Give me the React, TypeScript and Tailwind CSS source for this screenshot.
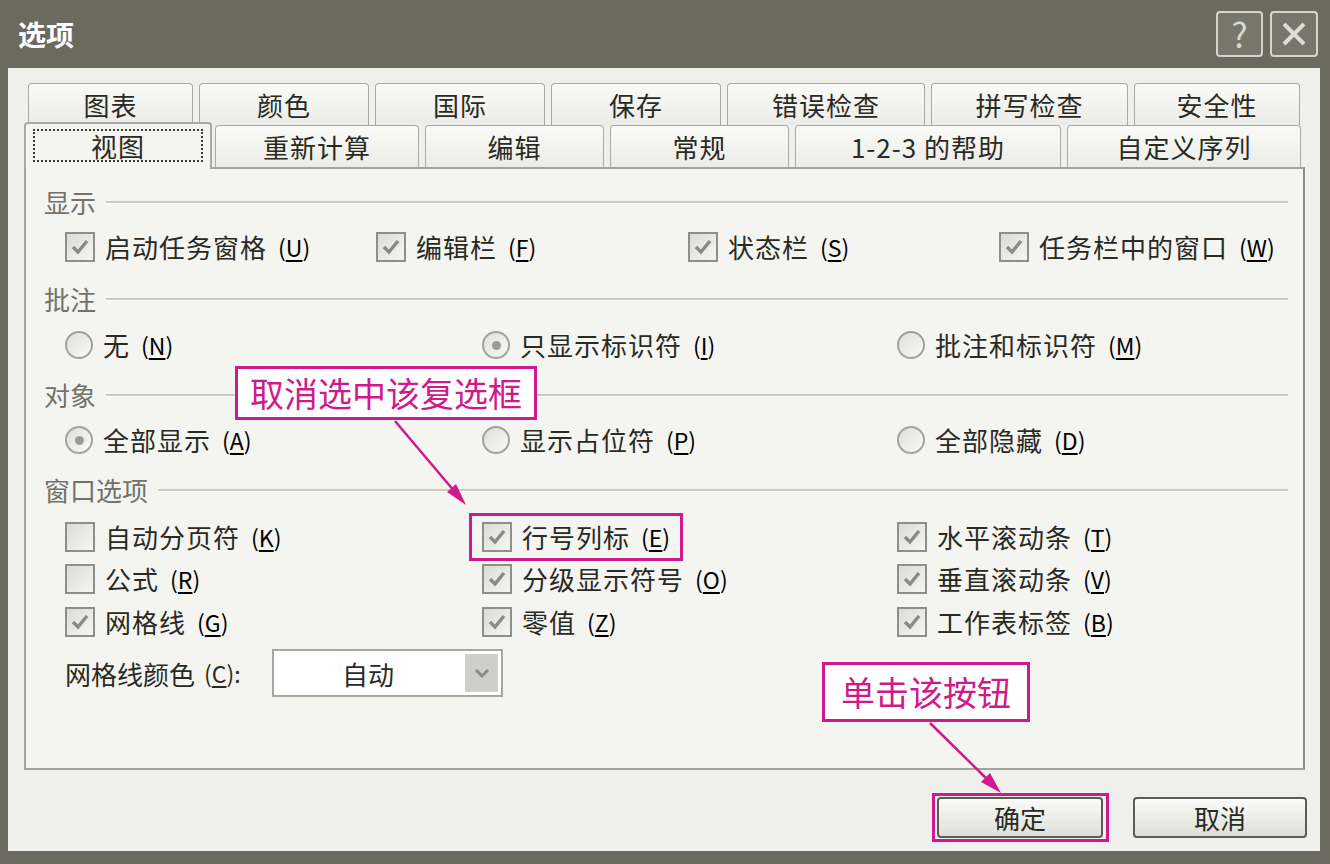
import React from "react";

const FONT = { fontFamily: '"Noto Sans CJK SC", "Noto Sans", sans-serif' };

function Key({ k }: { k: string }) {
    return (
        <span className="ml-[11px] text-[23px]">
            (<span className="underline underline-offset-[3px]">{k}</span>)
        </span>
    );
}

function Check({ label, k, checked }: { label: string; k: string; checked?: boolean }) {
    return (
        <div className="flex items-center">
            <div className="w-[30px] h-[30px] border-2 border-[#8f8f88] bg-gradient-to-br from-[#dcdcd6] to-[#f5f5f2] flex items-center justify-center">
                {checked && (
                    <svg width="20" height="20" viewBox="0 0 20 20">
                        <path d="M3 10 L8 15 L17 4" fill="none" stroke="#8b8b80" strokeWidth="3.5" />
                    </svg>
                )}
            </div>
            <span className="ml-[10px] text-[26px] text-[#2a2a24] leading-none tracking-[1px]">{label}</span>
            <Key k={k} />
        </div>
    );
}

function Radio({ label, k, checked }: { label: string; k: string; checked?: boolean }) {
    return (
        <div className="flex items-center">
            <div className="w-[28px] h-[28px] rounded-full border-2 border-[#a3a39c] bg-gradient-to-br from-[#dededb] to-[#fafaf8] flex items-center justify-center">
                {checked && <div className="w-[9px] h-[9px] rounded-full bg-[#9b9b92]" />}
            </div>
            <span className="ml-[10px] text-[26px] text-[#2a2a24] leading-none tracking-[1px]">{label}</span>
            <Key k={k} />
        </div>
    );
}

function Heading({ label, mt }: { label: string; mt: string }) {
    return (
        <div className={`flex items-center h-[40px] pl-[18px] pr-[15px] ${mt}`}>
            <span className="text-[26px] text-[#72726a] leading-none">{label}</span>
            <div className="flex-1 ml-[10px] border-t-2 border-[#cacac4] border-b border-b-white" />
        </div>
    );
}

const backTabs = [
    { name: "图表", w: "w-[165px]" },
    { name: "颜色", w: "w-[170px]" },
    { name: "国际", w: "w-[170px]" },
    { name: "保存", w: "w-[170px]" },
    { name: "错误检查", w: "w-[198px]" },
    { name: "拼写检查", w: "w-[197px]" },
    { name: "安全性", w: "w-[166px]" },
];

const frontTabs = [
    { name: "重新计算", w: "w-[204px]" },
    { name: "编辑", w: "w-[179px]" },
    { name: "常规", w: "w-[179px]" },
    { name: "1-2-3 的帮助", w: "w-[266px]" },
    { name: "自定义序列", w: "w-[234px]" },
];

export default function App() {
    return (
        <div className="relative w-[1330px] h-[864px] bg-[#6b6a5e] flex flex-col overflow-hidden" style={FONT}>
            {/* Title bar */}
            <div className="h-[68px] flex items-center justify-between pl-[18px] pr-[12px]">
                <span className="text-[28px] font-bold text-white">选项</span>
                <div className="flex gap-[7px]">
                    <div className="w-[47px] h-[46px] rounded-[4px] border-2 border-[#d4d4cc] bg-[#77766a] flex items-center justify-center text-[34px] text-[#d8d8d0] leading-none">?</div>
                    <div className="w-[48px] h-[46px] rounded-[4px] border-2 border-[#d4d4cc] bg-[#77766a] flex items-center justify-center">
                        <svg width="30" height="30" viewBox="0 0 30 30">
                            <path d="M5 5 L25 25 M25 5 L5 25" stroke="#dcdcd4" strokeWidth="4" />
                        </svg>
                    </div>
                </div>
            </div>

            {/* Client area */}
            <div className="ml-[8px] mr-[10px] mb-[13px] flex-1 bg-[#efefeb] flex flex-col">
                {/* Tabs */}
                <div className="pt-[15px]">
                    <div className="flex gap-[6px] pl-[20px] h-[42px]">
                        {backTabs.map((t) => (
                            <div
                                key={t.name}
                                className={`${t.w} h-[42px] rounded-t-[4px] border border-b-0 border-[#a9a9a2] bg-gradient-to-b from-[#fafaf8] to-[#ebebe7] flex items-center justify-center text-[26px] text-[#2a2a24] tracking-[1px]`}
                            >
                                {t.name}
                            </div>
                        ))}
                    </div>
                    <div className="flex items-end h-[42px] pl-[16px]">
                        <div className="relative z-10 w-[188px] h-[47px] -mb-[2px] rounded-t-[4px] border-2 border-b-0 border-[#a9a9a2] bg-[#f4f4f1] flex items-center justify-center">
                            <div className="w-[170px] h-[33px] mt-[-3px] border-2 border-dotted border-[#3a3a34] flex items-center justify-center text-[26px] text-[#2a2a24] tracking-[1px]">
                                视图
                            </div>
                        </div>
                        <div className="flex gap-[6px] ml-[3px]">
                            {frontTabs.map((t) => (
                                <div
                                    key={t.name}
                                    className={`${t.w} h-[42px] rounded-t-[4px] border border-b-0 border-[#a9a9a2] bg-gradient-to-b from-[#fafaf8] to-[#ebebe7] flex items-center justify-center text-[26px] text-[#2a2a24] tracking-[1px]`}
                                >
                                    {t.name}
                                </div>
                            ))}
                        </div>
                    </div>
                </div>

                {/* Panel */}
                <div className="ml-[16px] w-[1281px] h-[603px] border-2 border-[#a4a49e] border-r-[#8c8c86] bg-[#f4f4f1] pt-[13px]">
                    <Heading label="显示" mt="mt-0" />
                    <div className="flex items-center h-[40px] pl-[39px] mt-[5px]">
                        <div className="w-[311px]"><Check label="启动任务窗格" k="U" checked /></div>
                        <div className="w-[312px]"><Check label="编辑栏" k="F" checked /></div>
                        <div className="w-[311px]"><Check label="状态栏" k="S" checked /></div>
                        <Check label="任务栏中的窗口" k="W" checked />
                    </div>

                    <Heading label="批注" mt="mt-[12px]" />
                    <div className="flex items-center h-[40px] pl-[39px] mt-[6px]">
                        <div className="w-[417px]"><Radio label="无" k="N" /></div>
                        <div className="w-[415px]"><Radio label="只显示标识符" k="I" checked /></div>
                        <Radio label="批注和标识符" k="M" />
                    </div>

                    <Heading label="对象" mt="mt-[10px]" />
                    <div className="flex items-center h-[40px] pl-[39px] mt-[5px]">
                        <div className="w-[417px]"><Radio label="全部显示" k="A" checked /></div>
                        <div className="w-[415px]"><Radio label="显示占位符" k="P" /></div>
                        <Radio label="全部隐藏" k="D" />
                    </div>

                    <Heading label="窗口选项" mt="mt-[10px]" />
                    <div className="flex items-center h-[40px] pl-[39px] mt-[7px]">
                        <div className="w-[417px]"><Check label="自动分页符" k="K" /></div>
                        <div className="w-[415px]"><Check label="行号列标" k="E" checked /></div>
                        <Check label="水平滚动条" k="T" checked />
                    </div>
                    <div className="flex items-center h-[40px] pl-[39px] mt-[2px]">
                        <div className="w-[417px]"><Check label="公式" k="R" /></div>
                        <div className="w-[415px]"><Check label="分级显示符号" k="O" checked /></div>
                        <Check label="垂直滚动条" k="V" checked />
                    </div>
                    <div className="flex items-center h-[40px] pl-[39px] mt-[3px]">
                        <div className="w-[417px]"><Check label="网格线" k="G" checked /></div>
                        <div className="w-[415px]"><Check label="零值" k="Z" checked /></div>
                        <Check label="工作表标签" k="B" checked />
                    </div>

                    <div className="flex items-center h-[48px] pl-[39px] mt-[7px]">
                        <div className="w-[207px] flex items-center text-[26px] text-[#2a2a24]">
                            网格线颜色
                            <span className="ml-[9px] text-[23px]">
                                (<span className="underline underline-offset-[3px]">C</span>):
                            </span>
                        </div>
                        <div className="w-[231px] h-[48px] border-2 border-[#a8a8a2] bg-white flex items-stretch">
                            <div className="flex-1 flex items-center justify-center text-[26px] text-[#2a2a24]">自动</div>
                            <div className="w-[33px] m-[3px] bg-[#cfcfc9] flex items-center justify-center">
                                <svg width="18" height="14" viewBox="0 0 18 14">
                                    <path d="M3 4 L9 10 L15 4" fill="none" stroke="#8c8c84" strokeWidth="3" />
                                </svg>
                            </div>
                        </div>
                    </div>
                </div>

                {/* Buttons */}
                <div className="flex justify-end gap-[30px] pr-[13px] mt-[27px]">
                    <button className="w-[166px] h-[41px] rounded-[4px] border-2 border-[#5c5c52] bg-gradient-to-b from-[#fbfbf9] to-[#dededa] text-[26px] text-[#2a2a24] flex items-center justify-center">
                        确定
                    </button>
                    <button className="w-[174px] h-[41px] rounded-[4px] border-2 border-[#5c5c52] bg-gradient-to-b from-[#fbfbf9] to-[#dededa] text-[26px] text-[#2a2a24] flex items-center justify-center">
                        取消
                    </button>
                </div>
            </div>

            {/* Annotations */}
            <div className="absolute left-[235px] top-[366px] w-[302px] h-[54px] border-[3px] border-[#d0198c] bg-white flex items-center justify-center text-[34px] text-[#d0198c] leading-none">
                取消选中该复选框
            </div>
            <div className="absolute left-[469px] top-[513px] w-[214px] h-[48px] border-[3px] border-[#d0198c]" />
            <div className="absolute left-[822px] top-[662px] w-[208px] h-[60px] border-[3px] border-[#d0198c] bg-white flex items-center justify-center text-[34px] text-[#d0198c] leading-none">
                单击该按钮
            </div>
            <div className="absolute left-[932px] top-[793px] w-[177px] h-[49px] border-[3px] border-[#d0198c]" />
            <svg className="absolute inset-0 pointer-events-none" width="1330" height="864">
                <line x1="395" y1="421" x2="455" y2="492" stroke="#d0198c" strokeWidth="2.5" />
                <polygon points="466,505 447,492 456,484" fill="#d0198c" />
                <line x1="930" y1="723" x2="990" y2="782" stroke="#d0198c" strokeWidth="2.5" />
                <polygon points="1001,793 981,782 990,773" fill="#d0198c" />
            </svg>
        </div>
    );
}
